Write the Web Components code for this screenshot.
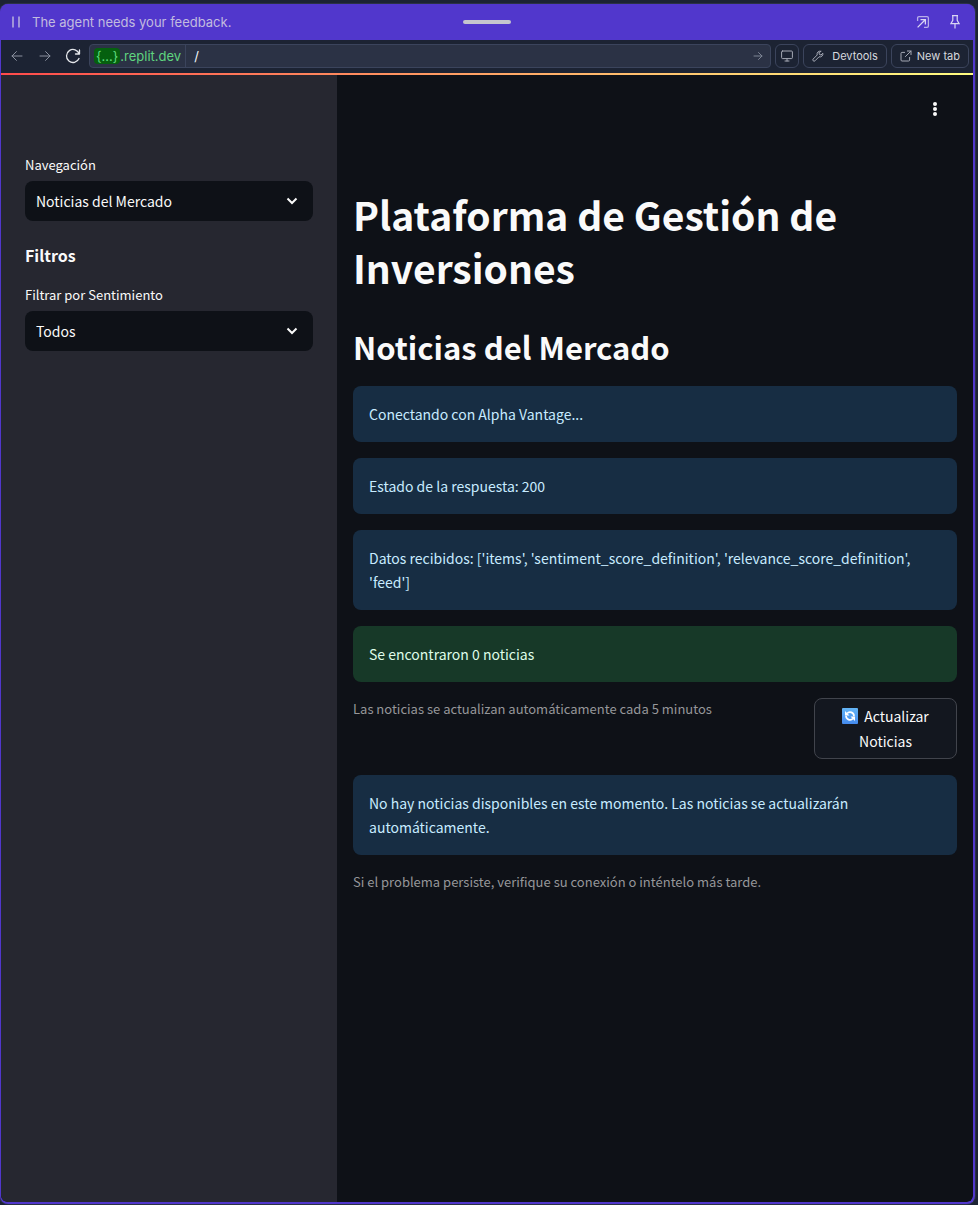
<!DOCTYPE html>
<html lang="es">
<head>
<meta charset="utf-8">
<meta name="viewport" content="width=device-width, initial-scale=1">
<title>Plataforma de Gestión de Inversiones</title>
<style>
  body { margin: 0; background: #1c2333; }
</style>
</head>
<body>
<preview-window>
  <agent-bar slot="title">The agent needs your feedback.</agent-bar>
  <browser-bar slot="toolbar" host="{…}" domain=".replit.dev" path="/"></browser-bar>
  <app-layout>
    <app-sidebar slot="sidebar">
      <select-field label="Navegación" value="Noticias del Mercado"></select-field>
      <sidebar-heading>Filtros</sidebar-heading>
      <select-field label="Filtrar por Sentimiento" value="Todos"></select-field>
    </app-sidebar>
    <page-titles>
      <span slot="title">Plataforma de Gestión de Inversiones</span>
      <span slot="section">Noticias del Mercado</span>
    </page-titles>
    <status-alert>Conectando con Alpha Vantage...</status-alert>
    <status-alert>Estado de la respuesta: 200</status-alert>
    <status-alert>Datos recibidos: ['items', 'sentiment_score_definition', 'relevance_score_definition', 'feed']</status-alert>
    <status-alert kind="success">Se encontraron 0 noticias</status-alert>
    <refresh-row>
      <text-caption>Las noticias se actualizan automáticamente cada 5 minutos</text-caption>
      <refresh-button slot="action">Actualizar Noticias</refresh-button>
    </refresh-row>
    <status-alert>No hay noticias disponibles en este momento. Las noticias se actualizarán automáticamente.</status-alert>
    <text-caption>Si el problema persiste, verifique su conexión o inténtelo más tarde.</text-caption>
  </app-layout>
</preview-window>

<script>
const define = (name, html, setup) => {
  const template = document.createElement('template');
  template.innerHTML = html;
  customElements.define(name, class extends HTMLElement {
    constructor() {
      super();
      this.attachShadow({ mode: 'open' }).append(template.content.cloneNode(true));
    }
    connectedCallback() { if (setup) setup(this, this.shadowRoot); }
  });
};

define('preview-window', `
  <style>
    :host {
      display: flex; flex-direction: column; box-sizing: border-box;
      min-height: calc(100vh - 5px); margin: 4px 3px 1px 0;
      border: solid #5137cc; border-width: 0 2px 2px 1px; border-radius: 8px;
      box-shadow: 0 0 0 1px #2b3245; overflow: hidden; background: #5137cc;
      --ui: Inter, "Noto Sans", sans-serif;
      --app: "Noto Sans CJK SC", "Noto Sans", sans-serif;
    }
    .content { flex: 1; display: flex; flex-direction: column; overflow: hidden; border-radius: 0 0 6px 6px; }
  </style>
  <slot name="title"></slot>
  <slot name="toolbar"></slot>
  <div class="content"><slot></slot></div>`);

define('agent-bar', `
  <style>
    :host {
      display: grid; grid-template-columns: 1fr auto 1fr; align-items: center;
      height: 36px; padding: 0 10px; background: #5137cc; color: #c2bcdf;
      font: 13px/20px var(--ui);
    }
    .left { display: flex; align-items: center; gap: 11px; white-space: nowrap; }
    .grip { width: 48px; height: 4px; border-radius: 2px; background: #c5c6ce; }
    .right { display: flex; justify-content: flex-end; gap: 16px; }
    button { display: flex; padding: 0; border: 0; background: none; color: #d9d5f3; }
    svg { display: block; fill: none; stroke: currentColor; }
  </style>
  <div class="left">
    <svg width="10" height="14" viewBox="0 0 10 14" stroke-width="1.4" aria-hidden="true"><path d="M2 1.5v11M8 1.5v11"/></svg>
    <slot></slot>
  </div>
  <div class="grip"></div>
  <div class="right">
    <button aria-label="Open in window"><svg width="16" height="16" viewBox="0 0 16 16" stroke-width="1.3"><path opacity=".75" d="M2.6 7V4q0-1.400 1.400-1.400h8q1.400 0 1.400 1.400v8q0 1.400-1.400 1.400H9"/><path d="M2.6 13.4l7.6-7.6M5.500 5.6h4.900v4.900"/></svg></button>
    <button aria-label="Pin"><svg width="16" height="16" viewBox="0 0 16 16" stroke-width="1.2"><path d="M5 1.6h6M5.8 1.6v4.8L3.9 9.6h8.2l-1.9-3.2V1.6M8 9.6v5"/></svg></button>
  </div>`);

define('browser-bar', `
  <style>
    :host {
      display: flex; align-items: center; box-sizing: border-box; height: 35px;
      padding: 0 4px 3px 8px; background: linear-gradient(90deg, #ff4b4b, #fffd80) bottom / 100% 2px no-repeat #1c2333;
      font: 11px/16px var(--ui); color: #d6d8de;
    }
    svg { display: block; fill: none; stroke: currentColor; stroke-linecap: round; stroke-linejoin: round; }
    button, a { font: inherit; color: inherit; text-decoration: none; background: none; border: 0; padding: 0; display: flex; align-items: center; white-space: nowrap; }
    .nav { display: flex; gap: 12px; color: #8b91a0; margin-right: 8px; }
    .nav button { width: 16px; justify-content: center; }
    .nav .reload { color: #e5e7eb; }
    .address {
      flex: 1; display: flex; align-items: center; box-sizing: border-box; height: 24px; min-width: 0;
      border: 1px solid #3b445c; border-radius: 4px; background: #2b3245; color: #5fd47f;
      font-size: 13px;
    }
    .domain { display: flex; align-items: center; height: 100%; padding: 0 4px; border-right: 1px solid #3b445c; }
    mark { background: #05600f; color: #5fdc7f; border-radius: 4px; padding: 0 2px; }
    input { flex: 1; min-width: 0; border: 0; padding: 0 8px; background: none; color: #f5f9fc; font: inherit; outline: 0; }
    .go { color: #7d8494; padding: 0 7px; }
    .tool { box-sizing: border-box; height: 24px; border: 1px solid #3b445c; border-radius: 6px; padding: 0 8px; gap: 8px; margin-left: 4px; }
    .tool svg { color: #a5a9b5; }
    .screen { padding: 0 5px; }
    a.tool { gap: 5px; }
  </style>
  <div class="nav">
    <button aria-label="Back"><svg width="12" height="12" viewBox="0 0 12 12"><path d="M11 6H1M5.4 1.6 1 6l4.4 4.4"/></svg></button>
    <button aria-label="Forward"><svg width="12" height="12" viewBox="0 0 12 12"><path d="M1 6h10M6.6 1.6 11 6l-4.4 4.4"/></svg></button>
    <button class="reload" aria-label="Reload"><svg width="16" height="16" viewBox="0 0 16 16" stroke-width="1.3"><path d="M14.5 2v4h-4M14.2 6A6.5 6.5 0 1 0 14 10.5"/></svg></button>
  </div>
  <div class="address">
    <span class="domain"><mark></mark><span class="rest"></span></span>
    <input aria-label="Path">
    <button class="go" aria-label="Go"><svg width="10" height="10" viewBox="0 0 10 10"><path d="M1 5h8M5.5 1.5 9 5 5.5 8.5"/></svg></button>
  </div>
  <button class="tool screen" aria-label="Screen size"><svg width="12" height="12" viewBox="0 0 12 12"><rect x=".6" y="1" width="10.8" height="7.6" rx="1"/><path d="M4 11h4M6 8.6V11"/></svg></button>
  <button class="tool"><svg width="12" height="12" viewBox="0 0 12 12"><path d="M8.8 1.2A3 3 0 0 0 5.2 5L1.2 9a1.2 1.2 0 0 0 1.8 1.8l4-4a3 3 0 0 0 3.8-3.6L9 5 7.5 4.5 7 3z"/></svg>Devtools</button>
  <a class="tool" href="/" target="_blank"><svg width="12" height="12" viewBox="0 0 12 12"><path d="M4.6 2.4H2q-1 0-1 1V10q0 1 1 1h6.6q1 0 1-1V7.4M7.4 1H11v3.6M11 1 5.4 6.6"/></svg>New tab</a>`,
  (el, root) => {
    root.querySelector('mark').textContent = el.getAttribute('host');
    root.querySelector('.rest').textContent = el.getAttribute('domain');
    root.querySelector('input').value = el.getAttribute('path');
  });

define('app-layout', `
  <style>
    :host { flex: 1; display: grid; grid-template-columns: 336px minmax(0, 1fr); background: #0e1117; color: #fafafa; font-family: var(--app); }
    main { display: flex; flex-direction: column; gap: 16px; padding: 0 16px 96px; }
    header { display: flex; justify-content: flex-end; height: 80px; padding: 24px 12px 0 0; box-sizing: border-box; }
    button { width: 20px; height: 20px; padding: 0; border: 0; background: none; color: inherit; }
    svg { display: block; fill: currentColor; }
  </style>
  <slot name="sidebar"></slot>
  <main>
    <header><button aria-label="Menú"><svg width="20" height="20" viewBox="0 0 20 20"><circle cx="10" cy="5" r="2"/><circle cx="10" cy="10" r="2"/><circle cx="10" cy="15" r="2"/></svg></button></header>
    <slot></slot>
  </main>`);

define('app-sidebar', `
  <style>:host { display: block; padding: 80px 24px 24px; background: #262730; }</style>
  <slot></slot>`);

define('sidebar-heading', `
  <style>
    :host { display: block; margin: 22px 0 18px; }
    h3 { margin: 0; font-size: 16px; line-height: 24px; font-weight: 700; }
  </style>
  <h3><slot></slot></h3>`);

define('select-field', `
  <style>
    :host { display: block; }
    label { display: block; margin-bottom: 6px; font-size: 13px; line-height: 20px; }
    .box { display: grid; align-items: center; }
    select, svg { grid-area: 1 / 1; }
    select {
      appearance: none; width: 100%; height: 40px; border: 0; border-radius: 8px; padding: 0 40px 0 11px;
      background: #0e1117; color: inherit; font: 14px/24px var(--app);
    }
    svg { justify-self: end; margin-right: 15px; fill: none; stroke: currentColor; stroke-width: 2; pointer-events: none; }
  </style>
  <label for="field"></label>
  <div class="box">
    <select id="field"></select>
    <svg width="12" height="12" viewBox="0 0 12 12" aria-hidden="true"><path d="M1.5 3.5 6 8l4.5-4.5"/></svg>
  </div>`,
  (el, root) => {
    root.querySelector('label').textContent = el.getAttribute('label');
    root.querySelector('select').replaceChildren(new Option(el.getAttribute('value')));
  });

define('page-titles', `
  <style>
    :host { display: block; padding: 17px 0 2px; }
    h1 { margin: 0 0 32px; font-size: 39px; line-height: 53px; font-weight: 700; }
    h2 { margin: 0; font-size: 31px; line-height: 42px; font-weight: 600; }
  </style>
  <h1><slot name="title"></slot></h1>
  <h2><slot name="section"></slot></h2>`);

define('status-alert', `
  <style>
    :host { display: block; padding: 16px; border-radius: 8px; background: #172d43; color: #c7ebff; font-size: 14px; line-height: 24px; }
    :host([kind="success"]) { background: #173928; color: #dffde9; }
  </style>
  <div role="status"><slot></slot></div>`);

define('text-caption', `
  <style>
    :host { display: block; color: #96979a; font-size: 13px; line-height: 22px; }
  </style>
  <slot></slot>`);

define('refresh-row', `
  <style>:host { display: grid; grid-template-columns: 3fr 1fr; gap: 32px; align-items: start; }</style>
  <slot></slot>
  <slot name="action"></slot>`);

define('refresh-button', `
  <style>
    :host { display: block; }
    button {
      display: block; width: 100%; padding: 5px 12px 4px; border: 1px solid #41444c; border-radius: 8px;
      background: #13171f; color: #fafafa; font: 14px/25px var(--app);
    }
    svg { width: 16px; height: 16px; vertical-align: -2px; margin-right: 6px; }
  </style>
  <button><svg viewBox="0 0 16 16" aria-hidden="true"><defs><linearGradient id="g" x2="0" y2="1"><stop stop-color="#64b5f6"/><stop offset="1" stop-color="#448aee"/></linearGradient></defs><rect width="16" height="16" rx="1" fill="url(#g)"/><g fill="none" stroke="#fff" stroke-width="1.7"><path d="M5 5.5A4 4 0 0 1 12 8.2M11 10.5A4 4 0 0 1 4 7.8"/></g><path fill="#fff" d="M3 3v4.500h4.500zM13 13V8.500H8.500z"/></svg><slot></slot></button>`);
</script>
</body>
</html>
